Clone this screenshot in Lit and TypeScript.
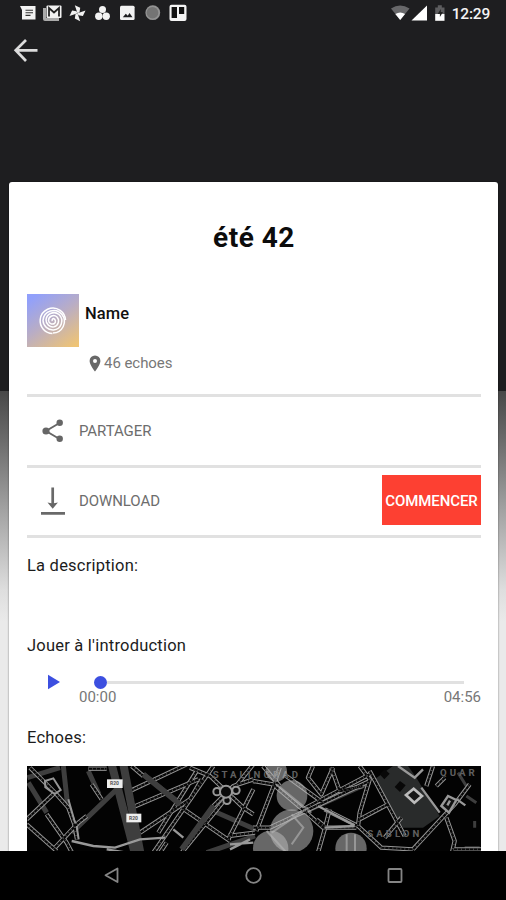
import { LitElement, html, css, svg } from "lit";
import { customElement } from "lit/decorators.js";

@customElement("status-bar")
class StatusBar extends LitElement {
  static styles = css`
    :host { display: flex; justify-content: space-between; align-items: center; height: 26px; padding: 0 16px 0 20px; box-sizing: border-box; }
    .group { display: flex; align-items: center; }
    svg { display: block; }
    .time { color: #f4f4f4; font: 500 15.5px/26px Roboto, sans-serif; letter-spacing: -0.2px; margin-left: 6px; padding-top: 1px; }
  `;
  render() {
    return html`
      <div class="group">
        <svg width="170" height="26" viewBox="20 0 170 26">
          <path d="M20 6h15.5v13.5H22V10z" fill="#f2f2f2" />
          <path d="M25.5 10.2h7.5M25.5 12.8h7.5M25.5 15.4h5" stroke="#333" stroke-width="1.1" />
          <path d="M43 8h3v10h13v3H45q-2 0-2-2z" fill="#aaa" />
          <rect x="46.5" y="5.5" width="15" height="12.5" rx="1" fill="#f2f2f2" />
          <path d="M49 16.5V8l5 4.5L59 8v8.500" fill="none" stroke="#222" stroke-width="1.8" />
          <g fill="#f2f2f2">
            <path d="M77.500 13.200 74.800 5.200l5.400 2.600-.7 4.400z" />
            <path d="M77.500 13.200 74.800 5.200l5.400 2.600-.7 4.400z" transform="rotate(90 77.5 13.2)" />
            <path d="M77.500 13.200 74.800 5.200l5.400 2.600-.7 4.400z" transform="rotate(180 77.5 13.2)" />
            <path d="M77.500 13.200 74.800 5.200l5.400 2.600-.7 4.400z" transform="rotate(270 77.5 13.2)" />
            <circle cx="102.5" cy="9.5" r="3.5" /><circle cx="98.8" cy="16.3" r="3.7" /><circle cx="106.2" cy="16.3" r="3.7" />
            <rect x="120" y="5.7" width="14.6" height="14.3" rx="1.5" />
          </g>
          <path d="M122.8 17.3l3-3.5 2 2 1.7-2.7 3 4.2z" fill="#1e1e20" />
          <circle cx="152.8" cy="12.7" r="7.4" fill="#939393" /><circle cx="152.5" cy="12.7" r="5.8" fill="#747474" />
          <rect x="169.5" y="4.8" width="17" height="16.2" rx="2" fill="#f4f4f4" />
          <rect x="171.6" y="7" width="5.4" height="11" fill="#111" /><rect x="179" y="7" width="5.2" height="7" fill="#111" />
        </svg>
      </div>
      <div class="group">
        <svg width="56" height="26" viewBox="390 0 56 26">
          <path d="M391 8.5Q400 2.5 409.5 8.5L400.2 20z" fill="#68686a" />
          <path d="M395.3 14q5-3 9.8 0l-4.900 6z" fill="#fff" />
          <path d="M427 5.5v15h-15.500z" fill="#fff" />
          <path d="M435.2 14V7.5h2.6V5.3h4v2.2h2.7V14z" fill="#5d5d5f" />
          <path d="M435.2 14h9.3v6.8h-9.300z" fill="#fff" />
          <path d="M440.8 9l-3.200 5h2.3v3l3.1-5h-2.200z" fill="#222" />
        </svg>
        <span class="time">12:29</span>
      </div>`;
  }
}

// Left and right halves of the district map, in thirds of a pixel.
const STREETS_WEST = [
  "M90 35l75 75 40 45 18 50 8 45", "M165 110L80 190", "M140 175l60 85 15 28", "M80 205l90 80",
  "M165 275l70-75 25-20", "M275 85l30 45",
  "M390 105l170-80", "M395 155l200-85", "M420 230l150-100 35-60",
  "M395 30l35 30M545 155l145 100", "M460 290L640 30", "M545 290L700 100l60-75", "M570 35l60 25 100 95 30 20",
  "M760 100l-30 60-45 90", "M590 45L475 230", "M640 150l60-60 60-20",
  "M685 240l80-10", "M480 290l20-30", "M265 38h55",
];
const STREETS_EAST = [
  "M0 75l60 10 100 85 50 45h100", "M10 225l50-130 20-60", "M0 215h50L190 150l160-75",
  "M350 45l105 195M480 280l125-135 45-60", "M320 30l30 40-30 100-5 40 70 65 95 5", "M150 160l200-105",
  "M195 290l20-70 15-60", "M180 30l-15 35 40 50 35-80", "M235 35l25 70 70-15",
  "M320 190l85-45", "M395 245l50-60", "M215 160l100 50", "M580 185l25 70-8 35M600 280h85", "M520 90l20-60", "M550 90l25-25",
  "M100 60l110 80", "M30 30l50 60", "M190 190l30 25",
];

@customElement("echo-map")
class EchoMap extends LitElement {
  static styles = css`
    :host { display: block; height: 86px; background: #030303; }
    svg { display: block; width: 100%; height: 100%; }
    .edge { fill: none; stroke: #979797; stroke-width: 13; stroke-linejoin: round; }
    .lane { fill: none; stroke: #060606; stroke-width: 7; stroke-linejoin: round; }
    .ties { fill: none; stroke: #5a5a5a; stroke-width: 7; stroke-dasharray: 2 10; }
    .major { fill: none; stroke: #3e3e3e; }
    .label { font: 700 29px Roboto, sans-serif; fill: #606060; letter-spacing: 9px; }
    .sign { font: 700 15px Roboto, sans-serif; fill: #555; }
  `;
  render() {
    const roads = (list: string[]) => svg`
      ${list.map((d) => svg`<path class="edge" d=${d} />`)}
      ${list.map((d) => svg`<path class="lane" d=${d} />`)}
      ${list.map((d) => svg`<path class="ties" d=${d} />`)}`;
    return html`<svg viewBox="81 30 1362 258" preserveAspectRatio="none">
      <g class="major" stroke-width="15">
        <path d="M82 65L180 35M85 80l55 90M190 30l12 110M265 45l32 70M350 100L215 230M430 55l120 95M640 165l125 55M620 290l145-50" />
      </g>
      ${roads(STREETS_WEST)}
      <path class="major" stroke-width="17" d="M545 280l95-130M430 55l110 90" />
      <path class="major" stroke-width="24" d="M335 25l70 270M370 25l52 270" />
      <path d="M215 255l65 15 65 5 75-25 75-5M320 280l60 10M520 220l30 25M690 265l70-5M690 280l60-30" fill="none" stroke="#999" stroke-width="7" />
      <path d="M135 75l25-8 22 35-18 12-28-20z M230 210l6 40M205 130l20 70" fill="none" stroke="#969696" stroke-width="6" />
      <g fill="#0a0a0a" stroke="#999" stroke-width="6">
        <circle cx="651" cy="107" r="11" /><circle cx="708" cy="103" r="11" /><circle cx="681" cy="133" r="11" /><circle cx="678" cy="107" r="18" />
      </g>
      <g transform="translate(759 0)">
        <path d="M365 70L420 30h45l25 35 70 115-50 35h-60z" fill="#292b2b" />
        <path d="M380 55l15-15 15 13-16 17zM425 93l16-18 17 13-17 20z" fill="#080808" />
        <path class="major" stroke-width="14" d="M150 170l200-90" />
        <path class="major" stroke-width="9" d="M640 90l-25-40M640 120l30 20M665 195v20M635 275h45" />
        ${roads(STREETS_EAST)}
        <path d="M435 30l50 35 25-25M505 95l55 75M215 215l90-5M195 150l110 58" fill="none" stroke="#999" stroke-width="7" />
        <path d="M482 98l25 22-23 20-25-23z" fill="#171717" stroke="#bbb" stroke-width="8" />
        <path d="M565 150l20-30 25 12-22 38z" fill="#111" stroke="#999" stroke-width="7" />
        <path d="M583 148l8-14M612 130l25 18" stroke="#999" stroke-width="7" />
      </g>
      <text class="label" x="638" y="67">STALINGRAD</text>
      <text class="label" x="1102" y="243">SABLON</text>
      <text class="label" x="1320" y="60">QUAR</text>
      <g transform="translate(759 0)" fill="#b9b9b9" fill-opacity=".55">
        <circle cx="70" cy="45" r="32" /><circle cx="117" cy="119" r="46" /><circle cx="116" cy="225" r="65" />
        <circle cx="53" cy="277" r="53" /><circle cx="294" cy="277" r="47" />
      </g>
      <path d="M829 85l105 85M815 230l110-75M875 175l35 40-35 50M1040 235v50M1065 235v50M800 225l60 65" fill="none" stroke="#b5b5b5" stroke-width="6" stroke-opacity=".6" />
      <rect x="321" y="70" width="47" height="26" fill="#eee" /><text class="sign" x="330" y="88">R20</text>
      <rect x="379" y="173" width="45" height="26" fill="#eee" /><text class="sign" x="387" y="191">R20</text>
    </svg>`;
  }
}

@customElement("app-root")
class AppRoot extends LitElement {
  static styles = css`
    :host {
      display: flex; flex-direction: column; height: 900px; width: 506px; overflow: hidden;
      font-family: Roboto, sans-serif; color: #1c1c1c;
      background: linear-gradient(#1e1e20 0 391px, #484848 391px, #6b6b6b 440px, #a2a2a2 510px, #dedede 590px, #eaeaea 622px);
    }
    svg { display: block; }
    .toolbar { height: 156px; padding: 12px 0 0 13px; box-sizing: border-box; }
    .card { flex: 1; min-height: 0; margin: 0 8px 0 9px; padding: 0 17px 0 18px; background: #fff; border-radius: 3px 3px 0 0; overflow: hidden; box-shadow: 0 0 2px rgba(0,0,0,.55); }
    .title { margin: 0; height: 112px; font-size: 28px; font-weight: 700; line-height: 111px; text-align: center; letter-spacing: .5px; color: #0c0c0c; }
    .author { display: flex; height: 100px; gap: 6px; }
    .avatar { width: 52px; height: 53px; background: linear-gradient(145deg, #91a0fb 8%, #b9adc5 48%, #efc474 96%); }
    .info { display: flex; flex-direction: column; }
    .name { height: 59px; line-height: 39px; font-size: 16.5px; font-weight: 500; color: #111; letter-spacing: .1px; }
    .count { display: flex; align-items: center; gap: 3px; height: 20px; margin-left: 4px; font-size: 15px; color: #777; letter-spacing: -.05px; }
    .row { display: flex; align-items: center; height: 67.5px; border-top: 3px solid #e1e1e1; color: #6d6d6d; font-size: 15px; letter-spacing: -.08px; }
    .row svg { margin: 0 13px 0 12px; }
    .row.last { border-bottom: 3px solid #e1e1e1; }
    .start { margin: 0 0 2px auto; width: 99px; height: 50px; border: 0; padding: 2px 0 0; background: #fd4032; color: #fff; font: 500 15px Roboto, sans-serif; letter-spacing: -.08px; }
    .heading { margin: 0; font-size: 16.5px; font-weight: 400; line-height: 24px; letter-spacing: .22px; }
    .description { height: 96px; padding-top: 16px; box-sizing: border-box; }
    .player { display: grid; grid-template-columns: 52px 1fr; height: 68px; padding-top: 17px; box-sizing: border-box; }
    .play { padding: 0 0 0 20px; }
    .play svg { margin-top: -1px; }
    .track { display: flex; align-items: center; height: 14px; margin: 0 17px 0 15px; }
    .knob { width: 13px; height: 13px; border-radius: 50%; background: #3c4fe0; }
    .line { flex: 1; height: 3px; background: #e1e1e1; }
    .times { display: flex; justify-content: space-between; font-size: 15px; line-height: 16px; color: #777; }
    .echoes { height: 39.5px; }
    .nav { height: 49px; background: #000; }
  `;
  render() {
    return html`
      <status-bar></status-bar>
      <div class="toolbar">
        <svg width="26" height="24" viewBox="13 38 26 24"><path d="M37.5 50.3H16M26 40 15.7 50.3 26 61" fill="none" stroke="#dcdcdc" stroke-width="2.7" /></svg>
      </div>
      <main class="card">
        <h1 class="title">été 42</h1>
        <section class="author">
          <div class="avatar">
            <svg width="52" height="53" viewBox="0 0 52 53" fill="none" stroke="#fff" stroke-width="1.5">
              <path d="M25.500 27a1.500 1.500 0 0 1 1-2.500 3 3 0 0 1 1 5 4 4 0 0 1-6-3 5 5 0 0 1 8.500-3.500 6 6 0 0 1-3 9.800 7 7 0 0 1-8-7 8 8 0 0 1 13-5.300 9 9 0 0 1-5.500 15.500 10 10 0 0 1-10.500-9.500 10.700 10.700 0 0 1 19-6 11.500 11.500 0 0 1-9 18.500" />
              <path d="M25.500 39.500a12.700 12.700 0 0 1-12.300-14 12.800 12.800 0 0 1 20-9.200 12.500 12.500 0 0 1 5.300 9.700" />
            </svg>
          </div>
          <div class="info">
            <div class="name">Name</div>
            <div class="count">
              <svg width="12" height="17" viewBox="0 0 12 17"><path fill-rule="evenodd" d="M6 .5A5.400 5.400 0 0 0 .6 6C.6 10 6 16.500 6 16.500S11.400 10 11.400 6A5.400 5.400 0 0 0 6 .5zM6 3.900a2 2 0 1 1 0 4 2 2 0 0 1 0-4z" fill="#686868" /></svg>
              <span>46 echoes</span>
            </div>
          </div>
        </section>
        <div class="row">
          <svg width="27" height="28" viewBox="39 417 27 28" fill="#666"><path d="M59.500 423 46 431l13.500 8" fill="none" stroke="#666" stroke-width="1.900" /><circle cx="59.700" cy="422.800" r="3.200" /><circle cx="46" cy="431" r="3.600" /><circle cx="59.700" cy="438.800" r="3.200" /></svg>
          <span>PARTAGER</span>
        </div>
        <div class="row last">
          <svg width="27" height="28" viewBox="39 487 27 28"><path d="M52.700 487.500V507M41 513.300h24" stroke="#696969" stroke-width="2.700" /><path d="M47.500 502.500l5.200 1 5.200-1-5.200 6.300z" fill="#666" /></svg>
          <span>DOWNLOAD</span>
          <button class="start">COMMENCER</button>
        </div>
        <h2 class="heading description">La description:</h2>
        <h2 class="heading intro">Jouer à l'introduction</h2>
        <section class="player">
          <div class="play"><svg width="14" height="16" viewBox="0 0 14 16"><path d="M1 .7 13 8 1 15.300z" fill="#3c4fe0" /></svg></div>
          <div>
            <div class="track"><span class="knob"></span><span class="line"></span></div>
            <div class="times"><span>00:00</span><span>04:56</span></div>
          </div>
        </section>
        <h2 class="heading echoes">Echoes:</h2>
        <echo-map></echo-map>
      </main>
      <nav class="nav">
        <svg width="506" height="49" viewBox="0 851 506 49" fill="none" stroke="#858585" stroke-width="1.800">
          <path d="M117.500 868.500v13.500l-12-6.700z" stroke-linejoin="round" /><circle cx="253.500" cy="875.500" r="7.300" /><rect x="388.500" y="869" width="13" height="13" rx="1" />
        </svg>
      </nav>`;
  }
}
